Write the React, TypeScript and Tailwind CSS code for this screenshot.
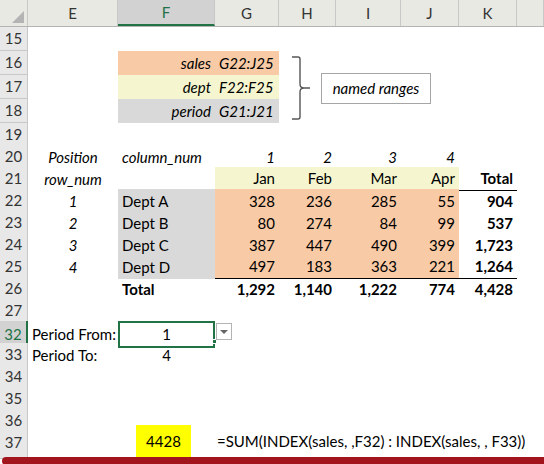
import React from 'react';

const COLS = 'grid grid-cols-[28px_90px_97px_64px_57px_65px_58px_58px_1fr]';
const ORANGE = 'bg-[#f8cba6]';
const CREAM = 'bg-[#f5f6cf]';
const GRAY = 'bg-[#d9d9d9]';

type Cell = { t?: React.ReactNode; c?: string };

function Row({ n, h = 'h-[22px]', cells, active }: { n: string; h?: string; cells: Cell[]; active?: boolean }) {
  const all = [...cells];
  while (all.length < 8) all.push({});
  return (
    <div className={`${COLS} ${h}`}>
      <div
        className={`flex items-center justify-center border-b border-r border-[#c8c8c8] text-[15px] ${
          active ? 'bg-[#d2d2d2] text-[#217346] border-r-2 border-r-[#217346]' : 'bg-[#e8e8e8] text-[#333]'
        }`}
      >
        {n}
      </div>
      {all.map((cell, i) => (
        <div key={i} className={`flex items-center px-[4px] whitespace-nowrap ${cell.c ?? ''}`}>
          {cell.t}
        </div>
      ))}
    </div>
  );
}

const r = 'justify-end';
const ctr = 'justify-center';
const it = 'italic';
const b = 'font-bold justify-end';

export default function App() {
  const data = [
    ['1', 'Dept A', '328', '236', '285', '55', '904'],
    ['2', 'Dept B', '80', '274', '84', '99', '537'],
    ['3', 'Dept C', '387', '447', '490', '399', '1,723'],
    ['4', 'Dept D', '497', '183', '363', '221', '1,264'],
  ];
  return (
    <div className="relative w-[544px] h-[464px] overflow-hidden bg-white text-[15px] text-black" style={{ fontFamily: 'Lato, "Open Sans", sans-serif' }}>
      {/* column header */}
      <div className={`${COLS} h-[27px] bg-[#e9e9e4] border-b border-[#b4b4b4] text-[15px] text-[#333]`}>
        <div className="relative border-r border-[#c8c8c8]">
          <div className="absolute right-[3px] bottom-[3px] w-0 h-0 border-l-[12px] border-l-transparent border-b-[12px] border-b-[#b4b4b4]" />
        </div>
        {['E', 'F', 'G', 'H', 'I', 'J', 'K', ''].map((l, i) => (
          <div
            key={i}
            className={`flex items-center justify-center border-r border-[#c8c8c8] ${
              l === 'F' ? 'bg-[#d2d2d2] text-[#217346] border-b-2 border-b-[#217346]' : ''
            }`}
          >
            {l}
          </div>
        ))}
      </div>

      <Row n="15" h="h-[24px]" cells={[]} />
      <Row n="16" h="h-[24px]" cells={[{}, { t: <i>sales</i>, c: `${ORANGE} ${r}` }, { t: <i>G22:J25</i>, c: ORANGE }]} />
      <Row n="17" h="h-[24px]" cells={[{}, { t: <i>dept</i>, c: `${CREAM} ${r}` }, { t: <i>F22:F25</i>, c: CREAM }]} />
      <Row n="18" h="h-[24px]" cells={[{}, { t: <i>period</i>, c: `${GRAY} ${r}` }, { t: <i>G21:J21</i>, c: GRAY }]} />
      <Row n="19" cells={[]} />
      <Row
        n="20"
        cells={[
          { t: 'Position', c: `${it} ${ctr}` },
          { t: 'column_num', c: it },
          { t: '1', c: `${it} ${r}` },
          { t: '2', c: `${it} ${r}` },
          { t: '3', c: `${it} ${r}` },
          { t: '4', c: `${it} ${r}` },
        ]}
      />
      <Row
        n="21"
        cells={[
          { t: 'row_num', c: `${it} ${ctr}` },
          {},
          { t: 'Jan', c: `${CREAM} ${r} border-b border-black` },
          { t: 'Feb', c: `${CREAM} ${r} border-b border-black` },
          { t: 'Mar', c: `${CREAM} ${r} border-b border-black` },
          { t: 'Apr', c: `${CREAM} ${r} border-b border-black` },
          { t: 'Total', c: `${b} border-b border-black` },
        ]}
      />
      {data.map((d, i) => (
        <Row
          key={i}
          n={String(22 + i)}
          cells={[
            { t: d[0], c: `${it} ${ctr}` },
            { t: d[1], c: GRAY },
            ...d.slice(2, 6).map((v) => ({ t: v, c: `${ORANGE} ${r} ${i === 3 ? 'border-b border-black' : ''}` })),
            { t: d[6], c: `${b} ${i === 3 ? 'border-b border-black' : ''}` },
          ]}
        />
      ))}
      <Row
        n="26"
        cells={[
          {},
          { t: 'Total', c: 'font-bold' },
          { t: '1,292', c: b },
          { t: '1,140', c: b },
          { t: '1,222', c: b },
          { t: '774', c: b },
          { t: '4,428', c: b },
        ]}
      />
      <Row n="27" cells={[]} />
      <Row
        n="32"
        active
        cells={[
          { t: 'Period From:', c: 'overflow-visible' },
          { t: '1', c: `${ctr} relative border-2 border-[#217346]` },
        ]}
      />
      <Row n="33" cells={[{ t: 'Period To:' }, { t: '4', c: ctr }]} />
      <Row n="34" cells={[]} />
      <Row n="35" cells={[]} />
      <Row n="36" cells={[]} />
      <Row n="37" cells={[]} />
      <Row n="" h="h-[6px]" cells={[]} />

      {/* fill handle & dropdown on F32 */}
      <div className="absolute left-[212px] top-[339px] w-[5px] h-[5px] bg-[#217346] border border-white" />
      <div className="absolute left-[216px] top-[323px] w-[16px] h-[17px] border border-[#b4b4b4] bg-white flex items-center justify-center">
        <div className="w-0 h-0 border-l-[4px] border-r-[4px] border-t-[4px] border-l-transparent border-r-transparent border-t-[#666]" />
      </div>

      {/* bracket and label */}
      <svg className="absolute left-[290px] top-[55px]" width="30" height="66" viewBox="0 0 30 66">
        <path d="M2 2 H8 Q10 2 10 4 V29 Q10 33 14 33 H20 M14 33 Q10 33 10 37 V62 Q10 64 8 64 H2" fill="none" stroke="#555" strokeWidth="1.4" />
      </svg>
      <div className="absolute left-[321px] top-[73px] w-[110px] h-[31px] border border-[#a6a6a6] bg-white flex items-center justify-center italic">
        named ranges
      </div>

      {/* result and formula */}
      <div className="absolute left-[136px] top-[425px] w-[55px] h-[32px] bg-[#ffff00] flex items-center justify-center">4428</div>
      <div className="absolute left-[217px] top-[430px] h-[22px] flex items-center whitespace-nowrap">
        =SUM(INDEX(sales, ,F32) : INDEX(sales, , F33))
      </div>

      <div className="absolute left-[2px] right-0 top-[457px] h-[8px] rounded-l bg-[#a3151c]" />
    </div>
  );
}
